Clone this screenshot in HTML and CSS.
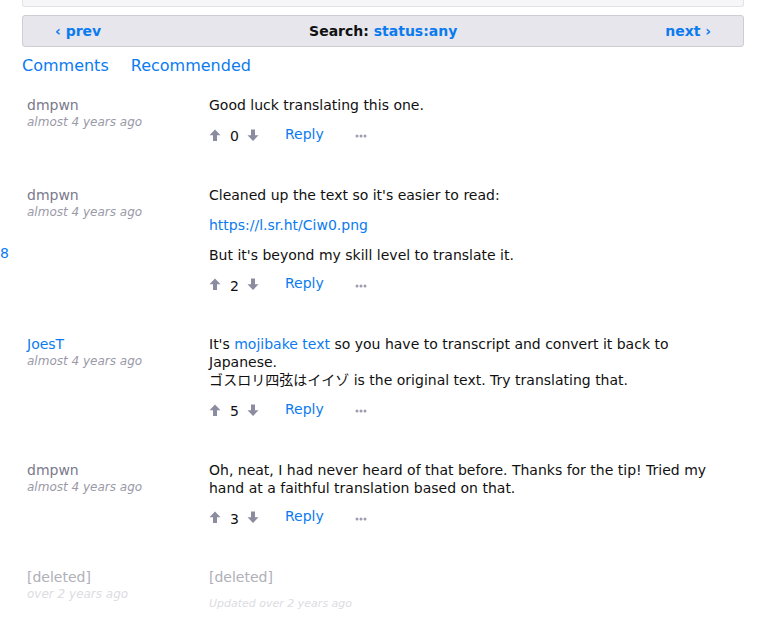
FILE: index.html
```html
<html>
<head>
  <title>Comments</title>
  <link rel="stylesheet" href="styles.css">
</head>
<body>
  <div class="topBox"></div>

  <div class="navBar">
    <a class="navLink">&lsaquo; prev</a>
    <span class="navTitle">Search: <a class="navLink">status:any</a></span>
    <a class="navLink">next &rsaquo;</a>
  </div>

  <div class="tabs">
    <a class="tab">Comments</a>
    <a class="tab">Recommended</a>
  </div>

  <span class="stray">8</span>

  <div class="comment">
    <div class="author">
      <div class="name">dmpwn</div>
      <div class="date">almost 4 years ago</div>
    </div>
    <div class="body">
      <p>Good luck translating this one.</p>
      <div class="actions">
        <svg class="vote" viewBox="0 0 12 12"><path d="M6 0.5 L11.5 6.2 H8 V12 H4 V6.2 H0.5 Z"/></svg>
        <span class="score">0</span>
        <svg class="vote" viewBox="0 0 12 12"><path d="M6 12 L11.5 6.3 H8 V0.5 H4 V6.3 H0.5 Z"/></svg>
        <a class="reply">Reply</a>
        <svg class="more" viewBox="0 0 12 4"><circle cx="2" cy="2" r="1.5"/><circle cx="6" cy="2" r="1.5"/><circle cx="10" cy="2" r="1.5"/></svg>
      </div>
    </div>
  </div>

  <div class="comment">
    <div class="author">
      <div class="name">dmpwn</div>
      <div class="date">almost 4 years ago</div>
    </div>
    <div class="body">
      <p>Cleaned up the text so it's easier to read:</p>
      <p><a class="link">https://l.sr.ht/Ciw0.png</a></p>
      <p>But it's beyond my skill level to translate it.</p>
      <div class="actions">
        <svg class="vote" viewBox="0 0 12 12"><path d="M6 0.5 L11.5 6.2 H8 V12 H4 V6.2 H0.5 Z"/></svg>
        <span class="score">2</span>
        <svg class="vote" viewBox="0 0 12 12"><path d="M6 12 L11.5 6.3 H8 V0.5 H4 V6.3 H0.5 Z"/></svg>
        <a class="reply">Reply</a>
        <svg class="more" viewBox="0 0 12 4"><circle cx="2" cy="2" r="1.5"/><circle cx="6" cy="2" r="1.5"/><circle cx="10" cy="2" r="1.5"/></svg>
      </div>
    </div>
  </div>

  <div class="comment">
    <div class="author">
      <div class="name user">JoesT</div>
      <div class="date">almost 4 years ago</div>
    </div>
    <div class="body">
      <p>It's <a class="link">mojibake text</a> so you have to transcript and convert it back to Japanese.<br>ゴスロリ四弦はイイゾ is the original text. Try translating that.</p>
      <div class="actions">
        <svg class="vote" viewBox="0 0 12 12"><path d="M6 0.5 L11.5 6.2 H8 V12 H4 V6.2 H0.5 Z"/></svg>
        <span class="score">5</span>
        <svg class="vote" viewBox="0 0 12 12"><path d="M6 12 L11.5 6.3 H8 V0.5 H4 V6.3 H0.5 Z"/></svg>
        <a class="reply">Reply</a>
        <svg class="more" viewBox="0 0 12 4"><circle cx="2" cy="2" r="1.5"/><circle cx="6" cy="2" r="1.5"/><circle cx="10" cy="2" r="1.5"/></svg>
      </div>
    </div>
  </div>

  <div class="comment">
    <div class="author">
      <div class="name">dmpwn</div>
      <div class="date">almost 4 years ago</div>
    </div>
    <div class="body">
      <p>Oh, neat, I had never heard of that before. Thanks for the tip! Tried my hand at a faithful translation based on that.</p>
      <div class="actions">
        <svg class="vote" viewBox="0 0 12 12"><path d="M6 0.5 L11.5 6.2 H8 V12 H4 V6.2 H0.5 Z"/></svg>
        <span class="score">3</span>
        <svg class="vote" viewBox="0 0 12 12"><path d="M6 12 L11.5 6.3 H8 V0.5 H4 V6.3 H0.5 Z"/></svg>
        <a class="reply">Reply</a>
        <svg class="more" viewBox="0 0 12 4"><circle cx="2" cy="2" r="1.5"/><circle cx="6" cy="2" r="1.5"/><circle cx="10" cy="2" r="1.5"/></svg>
      </div>
    </div>
  </div>

  <div class="comment deleted">
    <div class="author">
      <div class="name">[deleted]</div>
      <div class="date">over 2 years ago</div>
    </div>
    <div class="body">
      <p>[deleted]</p>
      <div class="updated">Updated over 2 years ago</div>
    </div>
  </div>
</body>
</html>
```

FILE: styles.css
```css
body {
  margin: 0;
  padding: 0 18px 0 22px;
  font-family: "DejaVu Sans", Verdana, "Noto Sans CJK JP", sans-serif;
  font-size: 14px;
  color: #111;
  background: white;
  position: relative;
}

a { color: #0b7bef; text-decoration: none; }

.topBox {
  height: 6px;
  background: #f6f6f8;
  border: 1px solid #e2e2e8;
  border-top: none;
  border-radius: 0 0 3px 3px;
  margin-bottom: 8px;
}

.navBar {
  display: flex;
  justify-content: space-between;
  align-items: center;
  height: 30px;
  padding: 0 32px 0 32px;
  background: #e6e6ec;
  border: 1px solid #cdcdd3;
  border-radius: 3px;
  font-weight: bold;
  font-size: 14px;
}

.navTitle { color: #111; }

.tabs {
  display: flex;
  gap: 22px;
  margin-top: 9px;
  font-size: 16px;
}

.stray {
  position: absolute;
  left: 0;
  top: 245px;
  color: #0b7bef;
  font-size: 14px;
}

.comment {
  display: flex;
  padding-left: 5px;
  padding-right: 20px;
  margin-top: 20px;
  margin-bottom: 39px;
}

.comment:last-child { margin-bottom: 0; }

.author {
  width: 182px;
  flex-shrink: 0;
}

.name {
  color: #7a7a8c;
  line-height: 18px;
  margin-top: 1px;
}

.name.user { color: #0b7bef; }

.date {
  font-size: 12px;
  font-style: italic;
  color: #9a9aa8;
  line-height: 17px;
}

.body { flex: 1; min-width: 0; }

.body p {
  margin: 0 0 11px 0;
  line-height: 18px;
  padding-top: 1px;
}

.actions {
  display: flex;
  align-items: center;
  height: 22px;
  margin-top: -1.5px;
}

.vote {
  width: 12px;
  height: 12px;
  fill: #8c8ca0;
}

.score {
  margin: 3px 8px 0 9px;
}

.reply {
  margin-left: 26px;
  margin-top: -2px;
}

.more {
  margin-left: 31px;
  margin-top: 3px;
  width: 12px;
  height: 4px;
  fill: #9d9db0;
}

.deleted .name,
.deleted .body p { color: #b0b0b8; }

.deleted .date { color: #dcdce2; }

.updated {
  font-size: 11px;
  font-style: italic;
  color: #dcdce2;
  margin-top: 1px;
}
```
